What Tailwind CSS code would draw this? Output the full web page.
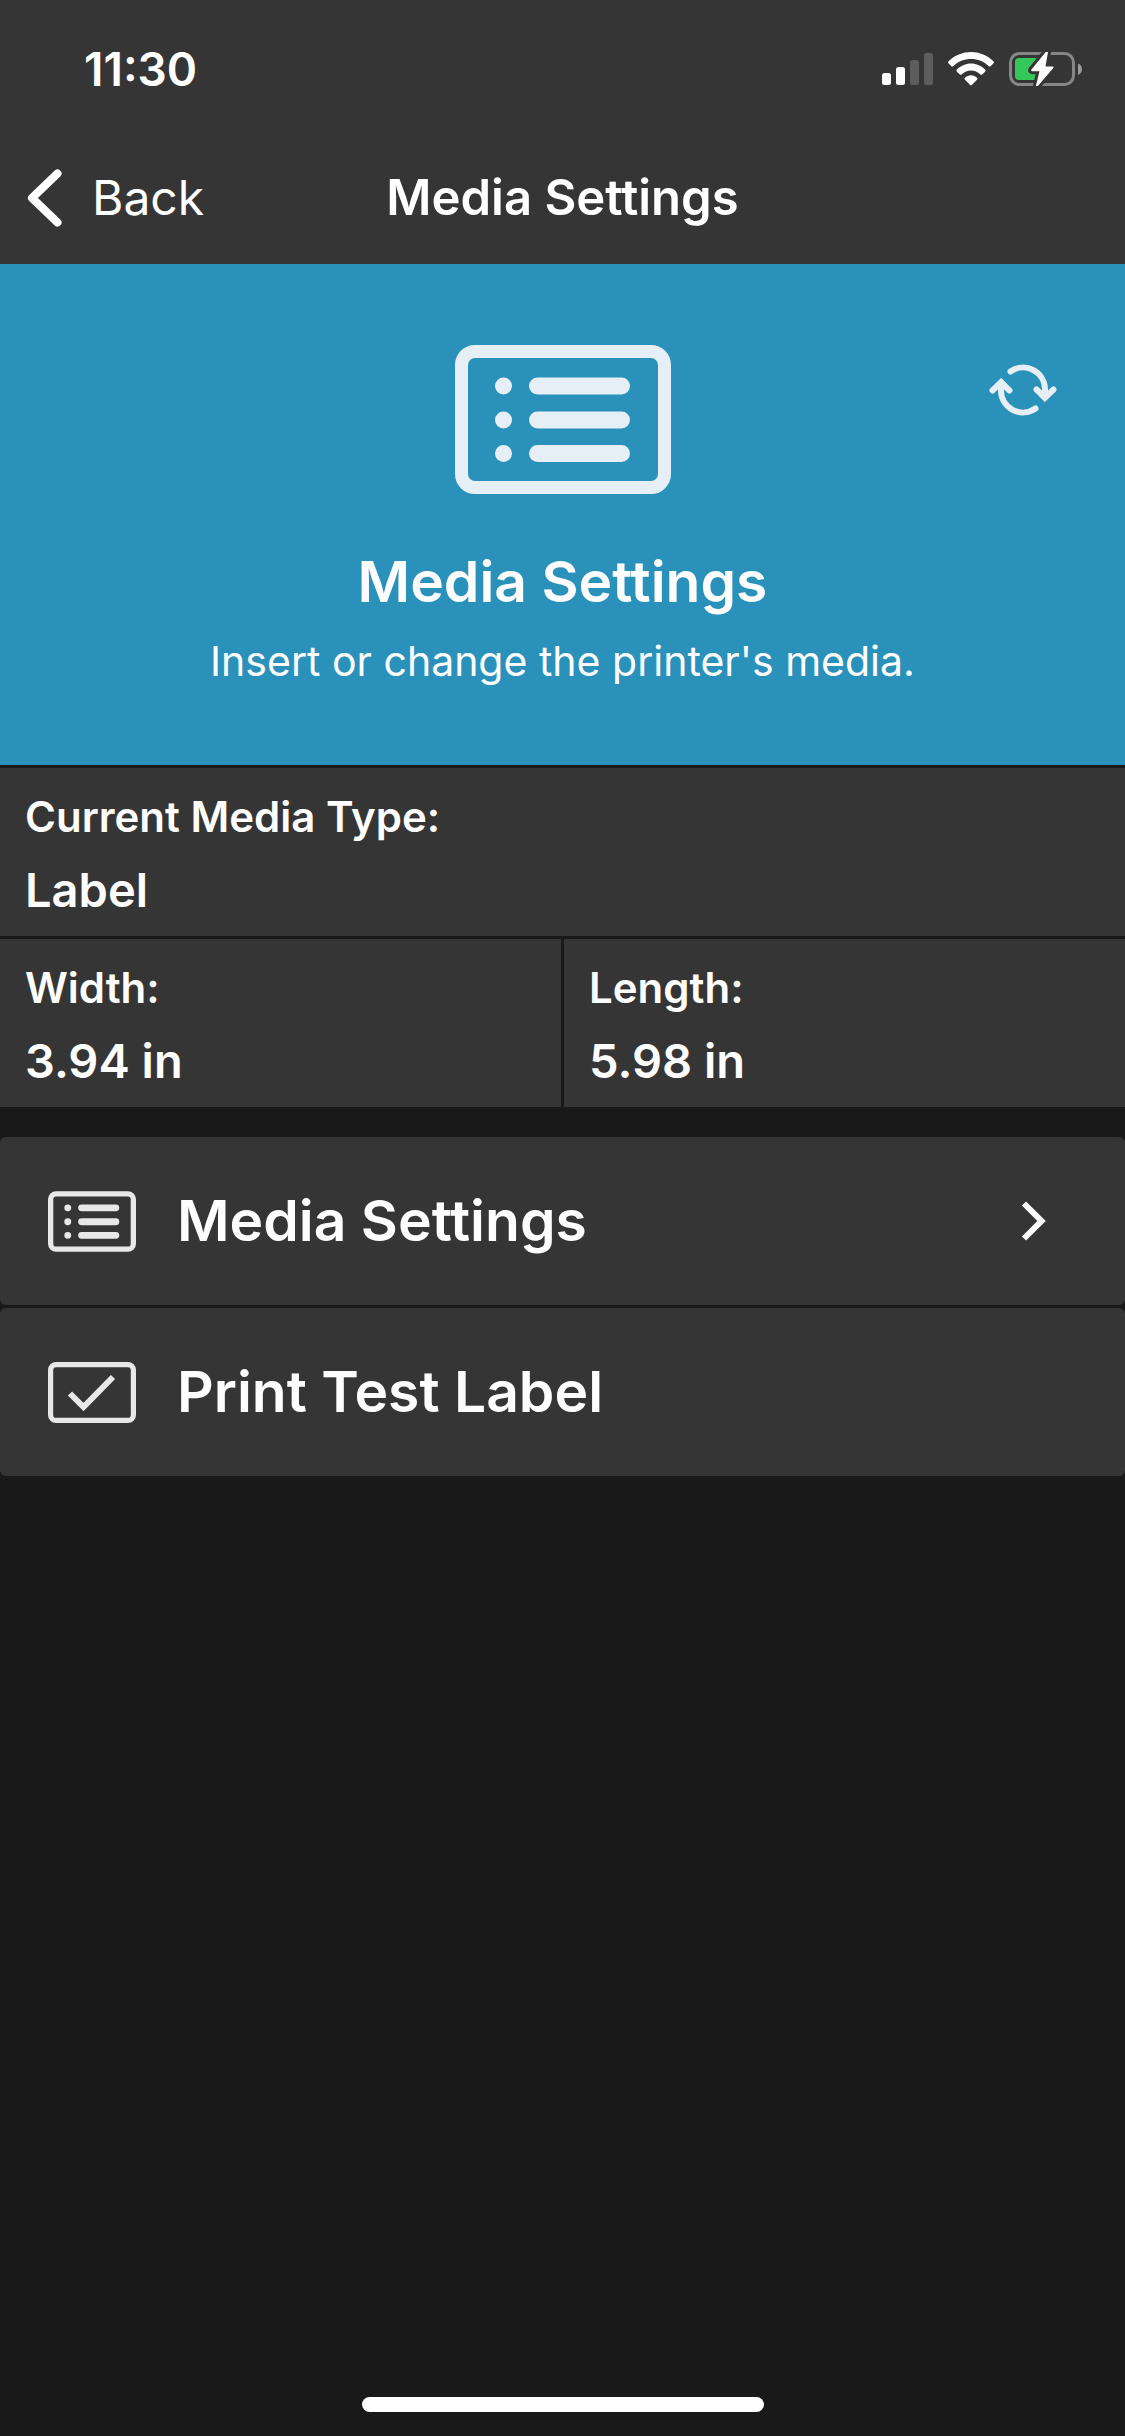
<!DOCTYPE html>
<html lang="en">
<head>
<meta charset="utf-8">
<meta name="viewport" content="width=device-width, initial-scale=1">
<title>Media Settings</title>
<script src="https://cdn.jsdelivr.net/npm/@tailwindcss/browser@4"></script>
</head>
<body class="flex min-h-screen flex-col bg-[#191919] font-['Inter',sans-serif] text-[#fdfdfd]">
<svg class="hidden" aria-hidden="true">
  <symbol id="media" viewBox="0 0 216 149">
    <rect x="6.5" y="6.5" width="203" height="136" rx="13.5" fill="none" stroke="currentColor" stroke-width="13"/>
    <g stroke="currentColor" stroke-width="17" stroke-linecap="round">
      <path d="M48.5 41h.01M48.5 75h.01M48.5 108.500h.01M82.500 41h84M82.500 75h84M82.500 108.500h84"/>
    </g>
  </symbol>
</svg>

<header class="bg-[#353535] text-white">
  <div class="flex h-[132px] items-center justify-between pt-1.5 pr-[43px] pl-[84px]">
    <time class="text-[46px] leading-[50px] font-semibold">11:30</time>
    <div class="flex items-center gap-[15px]">
      <svg class="h-[34px] w-[51px]" viewBox="0 0 51 34" fill="currentColor" aria-label="Signal">
        <rect x="0" y="21" width="9" height="12" rx="2.500"/>
        <rect x="14" y="15" width="9" height="18" rx="2.500"/>
        <rect x="28" y="8" width="9" height="25" rx="2.500" fill="#5d5d5d"/>
        <rect x="42" y="1" width="9" height="32" rx="2.500" fill="#5d5d5d"/>
      </svg>
      <svg class="h-[34px] w-[46px]" viewBox="0 0 46 34" fill="currentColor" aria-label="Wi-Fi">
        <path d="M.6 9.200C6.500 3.400 14.500 0 23 0s16.500 3.400 22.400 9.200c.7.700.7 1.500 0 2.200l-2.600 2.600c-.7.700-1.500.7-2.200 0C36 9.500 29.800 7 23 7S10 9.500 5.400 14c-.7.700-1.500.7-2.200 0L.6 11.400c-.7-.7-.7-1.500 0-2.200Z"/>
        <path d="M8.900 17.600C12.600 13.700 17.600 11.400 23 11.400s10.400 2.300 14.100 6.200c.6.700.6 1.400 0 2.100l-2.700 2.600c-.7.700-1.500.7-2.200 0A13 13 0 0 0 23 18.400a13 13 0 0 0-9.200 3.900c-.7.700-1.500.7-2.200 0l-2.700-2.600c-.6-.7-.6-1.400 0-2.100Z"/>
        <path d="M17 25.700c1.600-1.600 3.700-2.500 6-2.500s4.400.9 6 2.500c.7.700.6 1.300 0 2l-5 5c-.7.700-1.300.7-2 0l-5-5c-.6-.7-.7-1.300 0-2Z"/>
      </svg>
      <svg class="h-[34px] w-[73px]" viewBox="0 0 73 34" aria-label="Battery charging">
        <rect x="1.500" y="1.500" width="63" height="31" rx="9" fill="none" stroke="#868686" stroke-width="3"/>
        <path d="M69 11.500c2.500.8 4 3 4 5.700s-1.500 4.900-4 5.700Z" fill="#9a9a9a"/>
        <rect x="6" y="6" width="24" height="22" rx="4" fill="#34c759"/>
        <path d="M36.800-.2 22.500 17.500c-.8 1-.3 1.700.7 1.700h7.300L27 33.300c-.4 1.400.8 2 1.800.8l15.300-17.800c.8-1 .3-1.800-.7-1.800h-6.900L38.900.8c.4-1.400-1-2.200-2.100-1Z" fill="#fff" stroke="#353535" stroke-width="6" paint-order="stroke" stroke-linejoin="round"/>
      </svg>
    </div>
  </div>
  <nav class="grid h-[132px] grid-cols-[1fr_auto_1fr] items-center">
    <a href="#" class="flex items-center gap-[30px] pl-[27px] text-[48px] leading-[60px]">
      <svg class="h-[58px] w-[35px]" viewBox="0 0 35 58" fill="none" stroke="currentColor" stroke-width="8" stroke-linecap="round" stroke-linejoin="round" aria-hidden="true"><path d="M30.500 4.500 5 29l25.500 24.500"/></svg>
      Back
    </a>
    <h1 class="text-[49px] leading-[60px] font-semibold">Media Settings</h1>
  </nav>
</header>

<main>
  <section class="relative flex flex-col items-center bg-[#2a91ba] pt-[81px] pb-[79px]">
    <svg class="h-[149px] w-[216px] text-[#e6eff5]" aria-hidden="true"><use href="#media"/></svg>
    <h2 class="mt-[52px] text-[57px] leading-[72px] font-semibold">Media Settings</h2>
    <p class="mt-[18px] text-[41px] leading-[50px]">Insert or change the printer's media.</p>
    <button type="button" aria-label="Refresh" class="absolute top-[100px] right-[68px] text-[#e6eff5]">
      <svg class="h-[52px] w-[68px]" viewBox="0 0 68 52" fill="none" stroke="currentColor" stroke-width="6" stroke-linecap="round" aria-hidden="true">
        <g id="arrow">
          <path d="M21.500 7.500A22 22 0 0 1 56 26v6"/>
          <path d="m47.500 25.500 8.500 8.200 8.500-8.200"/>
          <path d="m50 32 5.800 6 5.800-6Z" fill="currentColor" stroke="none"/>
        </g>
        <use href="#arrow" transform="rotate(180 34 26)"/>
      </svg>
    </button>
  </section>

  <dl class="mt-[3px] grid grid-cols-2 gap-[3px] font-semibold">
    <div class="col-span-2 bg-[#353535] px-[25px] pt-6 pb-4">
      <dt class="text-[42px] leading-[50px]">Current Media Type:</dt>
      <dd class="mt-[18px] text-[47px] leading-[60px]">Label</dd>
    </div>
    <div class="bg-[#353535] px-[25px] pt-6 pb-4">
      <dt class="text-[42px] leading-[50px]">Width:</dt>
      <dd class="mt-[18px] text-[47px] leading-[60px]">3.94 in</dd>
    </div>
    <div class="bg-[#353535] px-[25px] pt-6 pb-4">
      <dt class="text-[42px] leading-[50px]">Length:</dt>
      <dd class="mt-[18px] text-[47px] leading-[60px]">5.98 in</dd>
    </div>
  </dl>

  <div class="mt-[30px] flex flex-col gap-[3px] text-[57px] leading-[72px] font-semibold">
    <button type="button" class="flex items-center gap-[41px] rounded-md bg-[#353535] py-12 pr-[79px] pl-12 text-left">
      <svg class="h-[61px] w-[88px] text-[#e8e8e8]" aria-hidden="true"><use href="#media"/></svg>
      <span class="grow">Media Settings</span>
      <svg class="h-10 w-[26px]" viewBox="0 0 26 40" fill="none" stroke="currentColor" stroke-width="6" aria-hidden="true"><path d="m4 2.500 17.500 17.500L4 37.500"/></svg>
    </button>
    <button type="button" class="flex items-center gap-[41px] rounded-md bg-[#353535] py-12 pr-[79px] pl-12 text-left">
      <svg class="h-[61px] w-[88px] text-[#e8e8e8]" viewBox="0 0 88 61" fill="none" stroke="currentColor" aria-hidden="true">
        <rect x="2.600" y="2.600" width="82.800" height="55.800" rx="5.500" stroke-width="5.200"/>
        <path d="m22 31.500 13.500 13.500L65 15" stroke-width="6"/>
      </svg>
      <span class="grow">Print Test Label</span>
    </button>
  </div>
</main>

<footer class="mt-auto flex justify-center pb-6">
  <div class="h-[15px] w-[402px] rounded-full bg-white"></div>
</footer>
</body>
</html>
